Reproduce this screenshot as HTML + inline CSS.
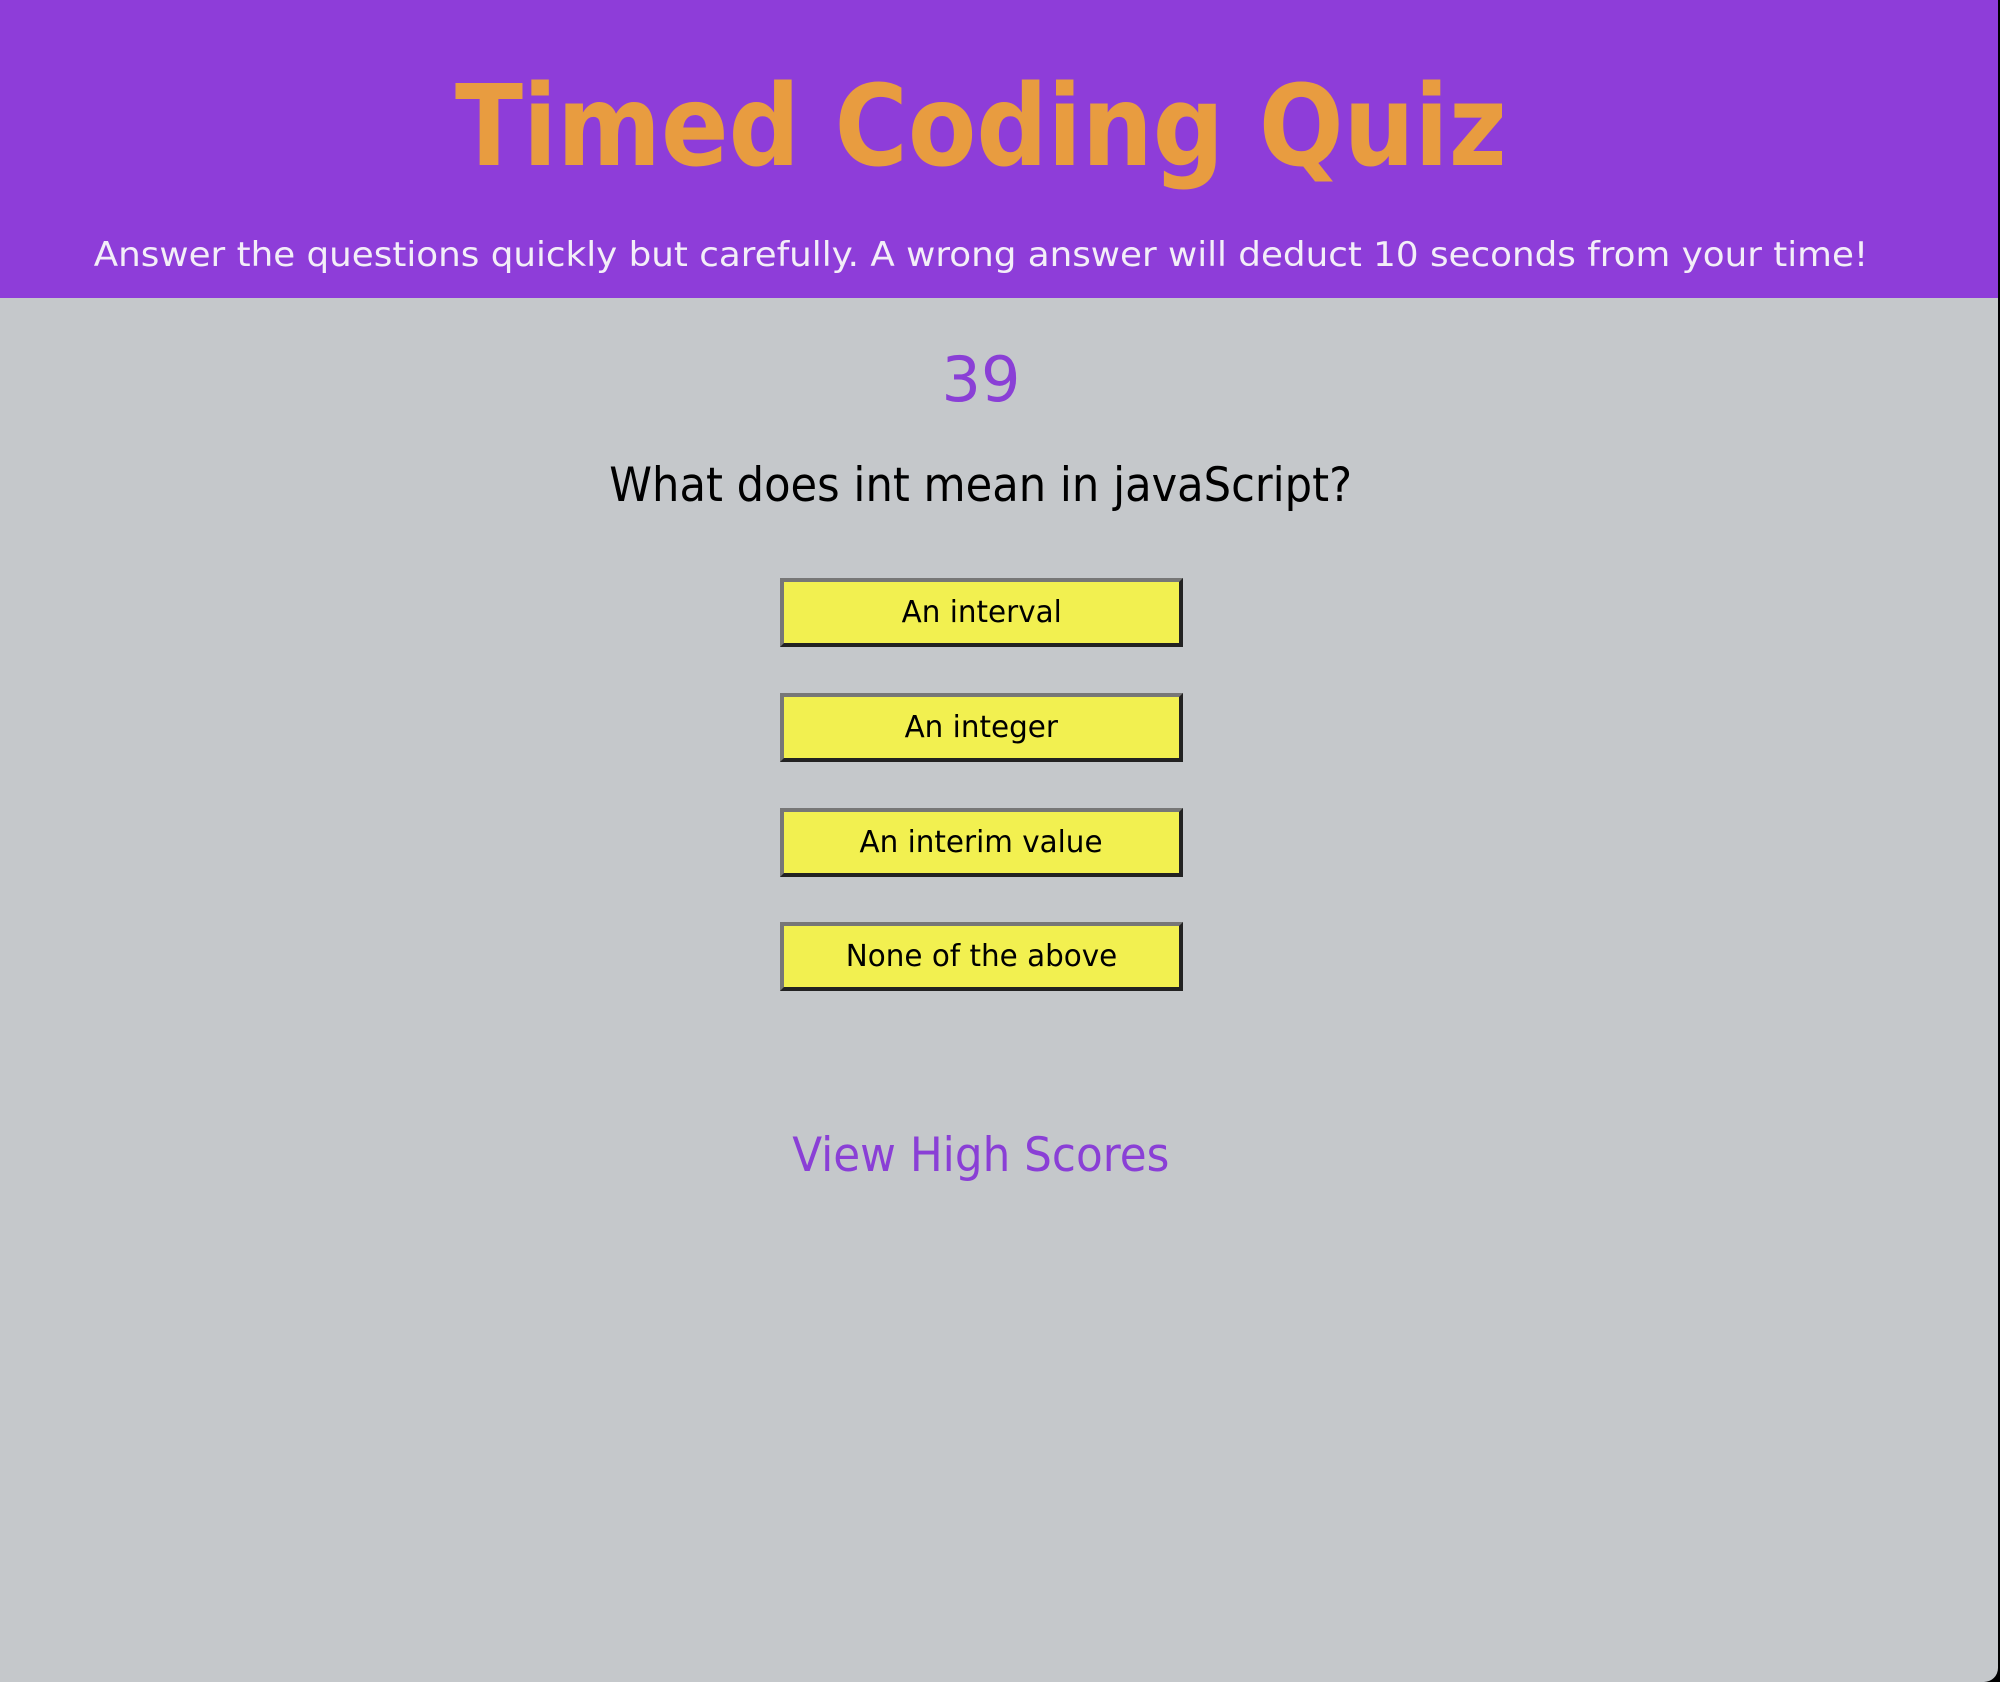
<!DOCTYPE html>
<html><head><style>
html,body{margin:0;padding:0;}
body{width:2000px;height:1682px;background:#000;font-family:"DejaVu Sans","Liberation Sans",sans-serif;overflow:hidden;}
.page{position:absolute;left:0;top:0;width:1998px;height:1682px;background:#c5c8cb;border-bottom-right-radius:14px;}
header{position:absolute;left:0;top:0;width:1998px;height:298px;background:#8e3dd9;}
h1{position:absolute;left:0;width:1962px;top:52px;margin:0;text-align:center;color:#e89c40;font-size:112px;font-weight:bold;line-height:150px;}
h1 span{display:inline-block;transform:scaleX(0.89);}
.sub{position:absolute;left:0;width:1962px;top:232px;text-align:center;color:#f3eef8;font-size:34px;line-height:46px;}
.sub span{display:inline-block;transform:scaleX(1.05);}
.timer{position:absolute;left:0;width:1962px;top:340px;text-align:center;color:#8a3fd6;font-size:62px;line-height:80px;}
.q{position:absolute;left:0;width:1962px;top:456px;text-align:center;color:#000;font-size:47px;line-height:60px;}
.q span{display:inline-block;transform:scaleX(0.92);}
.btn{position:absolute;left:780px;width:395px;height:61px;background:#f2f050;border:4px solid;border-color:#777 #222 #222 #777;text-align:center;font-size:30px;line-height:61px;color:#000;}
.btn span{display:inline-block;transform:scaleX(0.98);}
.hs{position:absolute;left:0;width:1962px;top:1126px;text-align:center;color:#8a3fd6;font-size:47px;line-height:60px;}
.hs span{display:inline-block;transform:scaleX(0.93);}
</style></head><body>
<div class="page">
<header>
<h1><span>Timed Coding Quiz</span></h1>
<div class="sub"><span>Answer the questions quickly but carefully. A wrong answer will deduct 10 seconds from your time!</span></div>
</header>
<div class="timer">39</div>
<div class="q"><span>What does int mean in javaScript?</span></div>
<div class="btn" style="top:578px"><span>An interval</span></div>
<div class="btn" style="top:693px"><span>An integer</span></div>
<div class="btn" style="top:808px"><span>An interim value</span></div>
<div class="btn" style="top:922px"><span>None of the above</span></div>
<div class="hs"><span>View High Scores</span></div>
</div>
</body></html>
